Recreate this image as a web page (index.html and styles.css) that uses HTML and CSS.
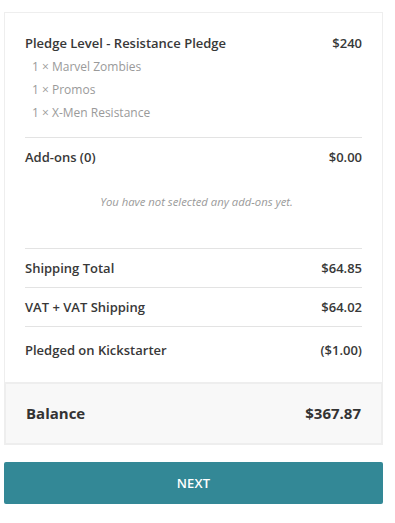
FILE: index.html
```html
<!DOCTYPE html>
<html>
<head>
<meta charset="utf-8">
<link rel="stylesheet" href="styles.css">
</head>
<body>
<div class="wrap">
  <div class="card">
    <div class="body">
      <div class="pledge">
        <div class="row head"><span>Pledge Level - Resistance Pledge</span><span>$240</span></div>
        <ul class="items">
          <li>1 × Marvel Zombies</li>
          <li>1 × Promos</li>
          <li>1 × X-Men Resistance</li>
        </ul>
      </div>
      <div class="addons">
        <div class="row head"><span>Add-ons (0)</span><span>$0.00</span></div>
        <p class="empty">You have not selected any add-ons yet.</p>
      </div>
      <div class="row line"><span>Shipping Total</span><span>$64.85</span></div>
      <div class="row line"><span>VAT + VAT Shipping</span><span>$64.02</span></div>
      <div class="row line last"><span>Pledged on Kickstarter</span><span>($1.00)</span></div>
    </div>
    <div class="balance"><span>Balance</span><span>$367.87</span></div>
  </div>
  <button class="next">NEXT</button>
</div>
</body>
</html>
```

FILE: styles.css
```css
* { box-sizing: border-box; }
body {
  margin: 0;
  font-family: "Open Sans", "Liberation Sans", sans-serif;
  color: #333;
  background: #fff;
}
.wrap {
  padding: 12px 12px 0 4px;
  width: 395px;
}
.card {
  border: 1px solid #eeeeee;
  background: #fff;
}
.body {
  padding: 20px 20px 0 20px;
}
.row {
  display: flex;
  justify-content: space-between;
  font-size: 13px;
  font-weight: 600;
  color: #383838;
  line-height: 20px;
}
.pledge {
  padding-bottom: 13px;
  border-bottom: 1px solid #e3e3e3;
}
.items {
  list-style: none;
  margin: 2px 0 0 0;
  padding: 0 0 0 7px;
}
.items li {
  font-size: 12px;
  color: #9a9a9a;
  line-height: 23px;
}
.addons {
  padding-top: 9px;
  border-bottom: 1px solid #e3e3e3;
}
.empty {
  margin: 28px 0 39px;
  padding-left: 6px;
  text-align: center;
  font-style: italic;
  font-size: 11.3px;
  color: #9a9a9a;
  line-height: 14px;
}
.line {
  padding: 9px 0 9px;
  border-bottom: 1px solid #e3e3e3;
}
.line.last {
  border-bottom: none;
  padding: 13px 0 22px;
}
.balance {
  display: flex;
  justify-content: space-between;
  align-items: center;
  height: 63px;
  padding: 0 20px 2px 20px;
  background: #f8f8f8;
  border: 2px solid #eeeeee;
  margin: 0 -1px -1px -1px;
  font-size: 15px;
  font-weight: 700;
}
.next {
  display: block;
  width: 379px;
  height: 42px;
  margin-top: 17px;
  border: none;
  border-radius: 2px;
  background: #338896;
  color: #fff;
  font-family: inherit;
  font-size: 13px;
  font-weight: 600;
  letter-spacing: 0.2px;
}
```
